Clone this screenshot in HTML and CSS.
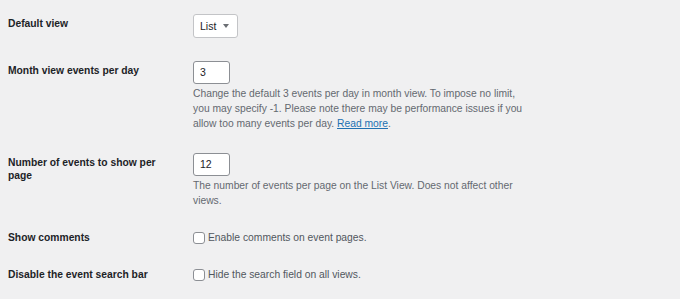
FILE: index.html
```html
<!DOCTYPE html>
<html lang="en">
<head>
<meta charset="utf-8">
<title>Settings</title>
<link rel="stylesheet" href="styles.css">
</head>
<body>
<div class="form-table">
  <div class="row">
    <div class="th">Default view</div>
    <div class="td">
      <div class="select"><span>List</span><span class="caret"></span></div>
    </div>
  </div>
  <div class="row">
    <div class="th">Month view events per day</div>
    <div class="td">
      <div class="input">3</div>
      <p class="desc">Change the default 3 events per day in month view. To impose no limit, you may specify -1. Please note there may be performance issues if you allow too many events per day. <a href="#">Read more</a>.</p>
    </div>
  </div>
  <div class="row">
    <div class="th">Number of events to show per page</div>
    <div class="td">
      <div class="input">12</div>
      <p class="desc">The number of events per page on the List View. Does not affect other views.</p>
    </div>
  </div>
  <div class="row row-check">
    <div class="th">Show comments</div>
    <div class="td">
      <label class="check"><span class="box"></span>Enable comments on event pages.</label>
    </div>
  </div>
  <div class="row row-check">
    <div class="th">Disable the event search bar</div>
    <div class="td">
      <label class="check"><span class="box"></span>Hide the search field on all views.</label>
    </div>
  </div>
</div>
</body>
</html>
```
FILE: styles.css
```css
html, body {
  margin: 0;
  padding: 0;
  background: #f0f0f1;
}
body {
  font-family: "Liberation Sans", Arial, sans-serif;
  color: #1d2327;
  padding: 3px 0 0 8px;
}
.form-table {
  display: flex;
  flex-direction: column;
}
.row {
  display: grid;
  grid-template-columns: 185px 336px;
}
.row:first-child .td {
  padding-bottom: 12px;
}
.th {
  font-weight: bold;
  font-size: 10.3px;
  line-height: 13px;
  padding: 14px 22px 12px 0;
}
.row-check .th {
  padding-top: 12px;
}
.td {
  padding: 11px 0;
}
.select {
  box-sizing: border-box;
  width: 45px;
  height: 24px;
  border: 1px solid #c3c4c7;
  border-radius: 3px;
  background: #fff;
  display: flex;
  align-items: center;
  justify-content: space-between;
  padding: 0 8px 0 6px;
  font-size: 10.5px;
}
.caret {
  width: 0;
  height: 0;
  border-left: 3px solid transparent;
  border-right: 3px solid transparent;
  border-top: 4px solid #6b6e73;
}
.input {
  box-sizing: border-box;
  width: 37px;
  height: 23px;
  border: 1px solid #8c8f94;
  border-radius: 3px;
  background: #fff;
  font-size: 10.5px;
  line-height: 21px;
  padding-left: 6px;
}
.desc {
  margin: 2px 0 0;
  font-size: 10.3px;
  line-height: 15px;
  color: #646970;
}
.desc a {
  color: #2271b1;
}
.check {
  display: flex;
  align-items: center;
  font-size: 10.3px;
  line-height: 13px;
  color: #50575e;
  padding-top: 1px;
}
.box {
  box-sizing: border-box;
  width: 12px;
  height: 12px;
  border: 1px solid #8c8f94;
  border-radius: 3px;
  background: #fff;
  margin-right: 3px;
}
```
